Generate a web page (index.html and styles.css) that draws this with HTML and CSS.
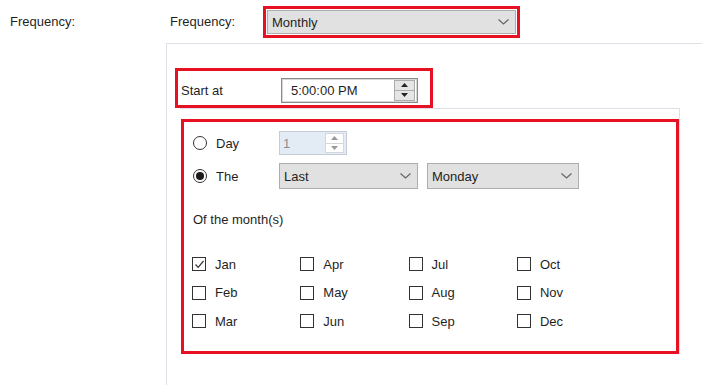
FILE: index.html
```html
<!DOCTYPE html>
<html lang="en">
<head>
  <meta charset="UTF-8">
  <title>Schedule Frequency</title>
  <link rel="stylesheet" href="styles.css">
</head>
<body>
  <div class="page">
    <div class="side">Frequency:</div>

    <div class="main">
      <!-- Frequency selector -->
      <div class="freq-row">
        <span class="freq-label">Frequency:</span>
        <div class="mark mark-freq">
          <div class="select select-freq">
            <span>Monthly</span>
            <svg class="chev" width="11" height="6" viewBox="0 0 11 6"><path d="M0.5 0.5 L5.5 5 L10.5 0.5" fill="none" stroke="#666" stroke-width="1.2"/></svg>
          </div>
        </div>
      </div>

      <div class="panel">
        <!-- Start time -->
        <div class="mark mark-start">
          <span class="start-label">Start at</span>
          <div class="time-box">
            <span>5:00:00 PM</span>
            <div class="spin">
              <div class="spin-btn"><svg width="7" height="4" viewBox="0 0 7 4"><path d="M0 4 L3.5 0 L7 4 Z" fill="#222"/></svg></div>
              <div class="spin-btn"><svg width="7" height="4" viewBox="0 0 7 4"><path d="M0 0 L3.5 4 L7 0 Z" fill="#222"/></svg></div>
            </div>
          </div>
        </div>

        <div class="group">
          <div class="mark mark-month">
            <div class="opt-row">
              <label class="radio-cell"><span class="radio"></span>Day</label>
              <div class="day-spin">
                <span>1</span>
                <div class="spin spin-light">
                  <div class="spin-btn"><svg width="7" height="4" viewBox="0 0 7 4"><path d="M0 4 L3.5 0 L7 4 Z" fill="#999"/></svg></div>
                  <div class="spin-btn"><svg width="7" height="4" viewBox="0 0 7 4"><path d="M0 0 L3.5 4 L7 0 Z" fill="#999"/></svg></div>
                </div>
              </div>
            </div>

            <div class="opt-row opt-row-the">
              <label class="radio-cell"><span class="radio checked"></span>The</label>
              <div class="select select-last">
                <span>Last</span>
                <svg class="chev" width="11" height="6" viewBox="0 0 11 6"><path d="M0.5 0.5 L5.5 5 L10.5 0.5" fill="none" stroke="#666" stroke-width="1.2"/></svg>
              </div>
              <div class="select select-day">
                <span>Monday</span>
                <svg class="chev" width="11" height="6" viewBox="0 0 11 6"><path d="M0.5 0.5 L5.5 5 L10.5 0.5" fill="none" stroke="#666" stroke-width="1.2"/></svg>
              </div>
            </div>

            <div class="months-title">Of the month(s)</div>

            <div class="months">
              <label class="check-cell"><span class="check checked"><svg width="11" height="11" viewBox="0 0 11 11"><path d="M1.5 5.5 L4.2 8.3 L9.5 2" fill="none" stroke="#333" stroke-width="1.2"/></svg></span>Jan</label>
              <label class="check-cell"><span class="check"></span>Apr</label>
              <label class="check-cell"><span class="check"></span>Jul</label>
              <label class="check-cell"><span class="check"></span>Oct</label>
              <label class="check-cell"><span class="check"></span>Feb</label>
              <label class="check-cell"><span class="check"></span>May</label>
              <label class="check-cell"><span class="check"></span>Aug</label>
              <label class="check-cell"><span class="check"></span>Nov</label>
              <label class="check-cell"><span class="check"></span>Mar</label>
              <label class="check-cell"><span class="check"></span>Jun</label>
              <label class="check-cell"><span class="check"></span>Sep</label>
              <label class="check-cell"><span class="check"></span>Dec</label>
            </div>
          </div>
        </div>
      </div>
    </div>
  </div>
</body>
</html>
```

FILE: styles.css
```css
* {
  box-sizing: border-box;
}
body {
  margin: 0;
  background: #fff;
  font-family: "Liberation Sans", Arial, sans-serif;
  font-size: 13px;
  color: #1f1f1f;
}
.page {
  display: flex;
  height: 385px;
  overflow: hidden;
}
.side {
  width: 166px;
  padding: 14px 0 0 10px;
}
.main {
  flex: 1;
  display: flex;
  flex-direction: column;
}

/* red highlight boxes */
.mark {
  border: 3px solid #e81123;
}

.freq-row {
  height: 43px;
  display: flex;
  align-items: center;
  padding-left: 4px;
}
.freq-label {
  width: 93px;
}
.mark-freq {
  width: 257px;
  height: 32px;
  margin-top: 1px;
  padding: 1px 0 0 1px;
}
.select {
  display: flex;
  align-items: center;
  justify-content: space-between;
  background: #e1e1e1;
  border: 1px solid #adadad;
  padding: 0 6px 0 4px;
}
.select-freq {
  width: 249px;
  height: 24px;
}

.panel {
  flex: 1;
  border-top: 1px solid #dcdfe5;
  border-left: 1px solid #dcdfe5;
}
.mark-start {
  width: 258px;
  height: 40px;
  margin: 24px 0 0 8px;
  padding: 4px 0 0 3px;
  display: flex;
  align-items: center;
}
.start-label {
  width: 100px;
}
.time-box {
  width: 137px;
  height: 25px;
  border: 1px solid #8a8a8a;
  box-shadow: inset 0 0 0 1px #d6d6d6;
  display: flex;
  align-items: center;
  justify-content: space-between;
  padding: 0 2px 0 9px;
}
.spin {
  width: 21px;
  height: 21px;
  display: flex;
  flex-direction: column;
  border: 1px solid #acacac;
  background: #e5e5e5;
}
.spin-btn {
  flex: 1;
  display: flex;
  align-items: center;
  justify-content: center;
}
.spin-btn + .spin-btn {
  border-top: 1px solid #acacac;
}

.group {
  width: 500px;
  margin-left: 13px;
  border-top: 1px solid #dcdfe5;
  border-right: 1px solid #dcdfe5;
  padding-top: 10px;
}
.mark-month {
  width: 498px;
  height: 235px;
  margin-left: 1px;
  padding: 9px 0 0 9px;
}
.opt-row {
  display: flex;
  align-items: center;
  height: 24px;
}
.opt-row-the {
  height: 26px;
  margin-top: 8px;
}
.radio-cell {
  width: 86px;
  display: flex;
  align-items: center;
}
.radio {
  width: 14px;
  height: 14px;
  border: 1px solid #333;
  border-radius: 50%;
  margin-right: 9px;
  display: flex;
  align-items: center;
  justify-content: center;
}
.radio.checked::after {
  content: '';
  width: 8px;
  height: 8px;
  border-radius: 50%;
  background: #1a1a1a;
}
.day-spin {
  width: 68px;
  height: 24px;
  background: #e3ebf4;
  border: 1px solid #c5ccd5;
  display: flex;
  align-items: center;
  justify-content: space-between;
  padding: 0 2px 0 3px;
  color: #8a8f96;
}
.spin-light {
  background: #fff;
  border-color: #d4d8dd;
  width: 19px;
  height: 20px;
}
.spin-light .spin-btn + .spin-btn {
  border-top-color: #d4d8dd;
}
.select-last {
  width: 139px;
  height: 26px;
}
.select-day {
  width: 152px;
  height: 26px;
  margin-left: 9px;
}
.months-title {
  margin: 23px 0 0 0;
  line-height: 16px;
}
.months {
  margin: 22px 0 0 -1px;
  display: grid;
  grid-template-columns: repeat(4, 108.3px);
  grid-auto-rows: 28.5px;
}
.check-cell {
  display: flex;
  align-items: center;
}
.check {
  width: 14px;
  height: 14px;
  border: 1px solid #333;
  margin-right: 9px;
  display: flex;
  align-items: center;
  justify-content: center;
}
```
